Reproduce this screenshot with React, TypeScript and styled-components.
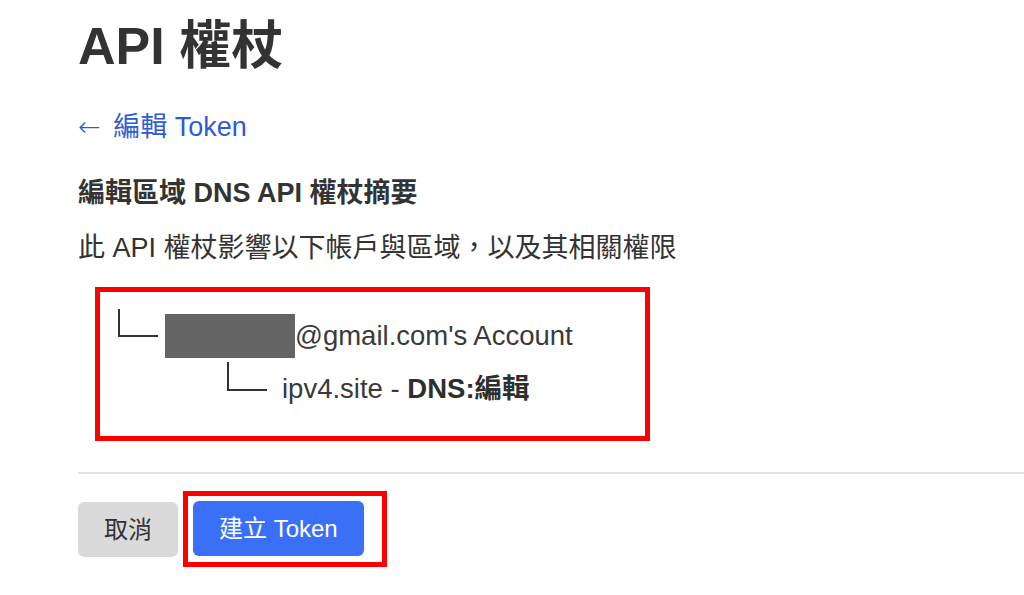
import React from "react";
import styled, { createGlobalStyle } from "styled-components";

const GlobalStyle = createGlobalStyle`
  html, body {
    margin: 0;
    padding: 0;
    background: #ffffff;
  }
  body {
    font-family: "Liberation Sans", "Noto Sans CJK TC", sans-serif;
    color: #333333;
  }
`;

const Page = styled.div`
  padding: 15px 0 0 78px;
  display: flex;
  flex-direction: column;
  align-items: flex-start;
`;

const Title = styled.h1`
  margin: 0;
  font-size: 52px;
  line-height: 62px;
  font-weight: 700;
  color: #333333;
`;

const BackLink = styled.a`
  margin-top: 34px;
  font-size: 27px;
  line-height: 32px;
  color: #2f5bd3;
  text-decoration: none;
  cursor: pointer;
`;

const Arrow = styled.span`
  font-family: "DejaVu Sans", sans-serif;
  font-weight: 300;
  margin-right: 5px;
`;

const Heading = styled.h2`
  margin: 34px 0 0;
  font-size: 27px;
  line-height: 32px;
  font-weight: 700;
  color: #333333;
`;

const Description = styled.p`
  margin: 23px 0 0;
  font-size: 27px;
  line-height: 32px;
  color: #333333;
`;

const Highlight = styled.div<{ $pad: string }>`
  border: 5px solid #ff0000;
  padding: ${(p) => p.$pad};
  box-sizing: border-box;
`;

const TreeBox = styled(Highlight)`
  margin: 23px 0 0 17px;
  width: 555px;
  display: flex;
  flex-direction: column;
  gap: 4px;
`;

const TreeRow = styled.div<{ $indent: number }>`
  display: flex;
  align-items: flex-start;
  margin-left: ${(p) => p.$indent}px;
`;

const Elbow = styled.span<{ $h: number }>`
  width: 40px;
  height: ${(p) => p.$h}px;
  border-left: 2px solid #333333;
  border-bottom: 2px solid #333333;
  box-sizing: border-box;
  flex: none;
`;

const Redacted = styled.span`
  margin: 5px 0 0 7px;
  width: 130px;
  height: 44px;
  background: #646464;
  flex: none;
`;

const NodeText = styled.span<{ $gap: number }>`
  margin: 5px 0 0 ${(p) => p.$gap}px;
  font-size: 27.5px;
  line-height: 44px;
  color: #3a3a3a;
  white-space: nowrap;
`;

const Strong = styled.b`
  font-weight: 700;
  color: #2e2e2e;
`;

const Divider = styled.hr`
  align-self: stretch;
  margin: 31px 0 0;
  border: none;
  height: 2px;
  background: #e2e2e2;
`;

const Actions = styled.div`
  margin-top: 17px;
  display: flex;
  align-items: center;
  gap: 5px;
`;

const Button = styled.button<{ $primary?: boolean }>`
  height: 55px;
  padding: 0 ${(p) => (p.$primary ? 26 : 26)}px;
  border: none;
  border-radius: 6px;
  font-family: "Liberation Sans", "Noto Sans CJK TC", sans-serif;
  font-size: 24px;
  line-height: 55px;
  background: ${(p) => (p.$primary ? "#3a6ff8" : "#dadada")};
  color: ${(p) => (p.$primary ? "#ffffff" : "#333333")};
  cursor: pointer;
`;

export default function App() {
  return (
    <>
      <GlobalStyle />
      <Page>
        <Title>API 權杖</Title>
        <BackLink>
          <Arrow>←</Arrow> 編輯 Token
        </BackLink>
        <Heading>編輯區域 DNS API 權杖摘要</Heading>
        <Description>此 API 權杖影響以下帳戶與區域，以及其相關權限</Description>
        <TreeBox $pad="17px 0 25px 18px">
          <TreeRow $indent={0}>
            <Elbow $h={28} />
            <Redacted />
            <NodeText $gap={0}>@gmail.com's Account</NodeText>
          </TreeRow>
          <TreeRow $indent={109}>
            <Elbow $h={29} />
            <NodeText $gap={15}>
              ipv4.site - <Strong>DNS:編輯</Strong>
            </NodeText>
          </TreeRow>
        </TreeBox>
        <Divider />
        <Actions>
          <Button>取消</Button>
          <Highlight $pad="5px 18px 6px 5px">
            <Button $primary>建立 Token</Button>
          </Highlight>
        </Actions>
      </Page>
    </>
  );
}
